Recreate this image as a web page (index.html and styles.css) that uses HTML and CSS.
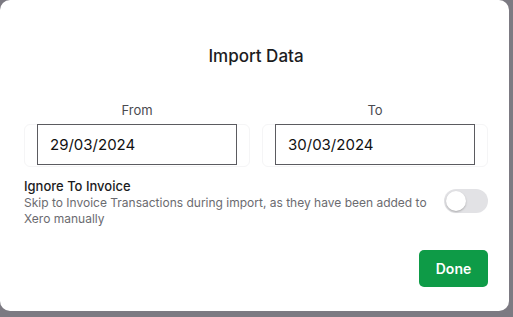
FILE: index.html
```html
<!DOCTYPE html>
<html lang="en">
<head>
    <meta charset="UTF-8">
    <meta name="viewport" content="width=device-width, initial-scale=1.0">
    <title>Import Data</title>
    <link rel="stylesheet" href="styles.css">
</head>
<body>
    <div class="modal">
        <h2 class="title">Import Data</h2>
        <div class="dates">
            <div class="field">
                <label class="field-label" for="from">From</label>
                <div class="field-box">
                    <input type="text" id="from" class="date-input" value="29/03/2024">
                </div>
            </div>
            <div class="field">
                <label class="field-label" for="to">To</label>
                <div class="field-box">
                    <input type="text" id="to" class="date-input" value="30/03/2024">
                </div>
            </div>
        </div>
        <div class="option">
            <div class="option-text">
                <div class="option-title">Ignore To Invoice</div>
                <div class="option-desc">Skip to Invoice Transactions during import, as they have been added to Xero manually</div>
            </div>
            <span class="toggle"><span class="knob"></span></span>
        </div>
        <div class="actions">
            <button class="btn-done">Done</button>
        </div>
    </div>
</body>
</html>
```
FILE: styles.css
```css
body {
    font-family: Inter, "Noto Sans", sans-serif;
    background: #7c7a82;
    margin: 0;
    width: 513px;
    height: 317px;
    overflow: hidden;
}
.modal {
    width: 509px;
    height: 311px;
    box-sizing: border-box;
    background: white;
    border-radius: 10px;
    padding: 44px 21px 0 24px;
}
.title {
    margin: 0;
    text-align: center;
    font-size: 17px;
    font-weight: 500;
    color: #1c1c1e;
    line-height: 24px;
}
.dates {
    display: grid;
    grid-template-columns: 1fr 1fr;
    gap: 12px;
    margin-top: 33px;
}
.field {
    display: flex;
    flex-direction: column;
    align-items: stretch;
}
.field-label {
    text-align: center;
    font-size: 13px;
    color: #4a4a4f;
    line-height: 18px;
    margin-bottom: 5px;
}
.field-box {
    border: 1px solid #f5f5f6;
    border-radius: 6px;
    padding: 0 12px 1px;
    height: 43px;
    box-sizing: border-box;
}
.date-input {
    width: 100%;
    height: 41px;
    box-sizing: border-box;
    border: 1px solid #5b5b60;
    border-radius: 0;
    margin-top: -1px;
    padding: 0 12px;
    font-family: inherit;
    font-size: 15px;
    color: #111;
    outline: none;
}
.option {
    display: flex;
    align-items: center;
    gap: 16px;
    margin-top: 11px;
}
.option-text {
    flex: 1;
}
.option-title {
    font-size: 13px;
    font-weight: 500;
    color: #1c1c1e;
    line-height: 17px;
}
.option-desc {
    font-size: 12px;
    color: #6b6b70;
    line-height: 16px;
}
.toggle {
    width: 44px;
    height: 24px;
    border-radius: 12px;
    background: #e2e2e5;
    position: relative;
    flex-shrink: 0;
    margin-top: -4px;
}
.knob {
    position: absolute;
    left: 2px;
    top: 2px;
    width: 20px;
    height: 20px;
    border-radius: 50%;
    background: white;
    box-shadow: 0 1px 2px rgba(0, 0, 0, 0.25);
}
.actions {
    display: flex;
    justify-content: flex-end;
    margin-top: 23px;
}
.btn-done {
    width: 69px;
    height: 37px;
    border: none;
    border-radius: 5px;
    background: #0e9b47;
    color: white;
    font-family: inherit;
    font-size: 14px;
    font-weight: 600;
    cursor: pointer;
}
```
